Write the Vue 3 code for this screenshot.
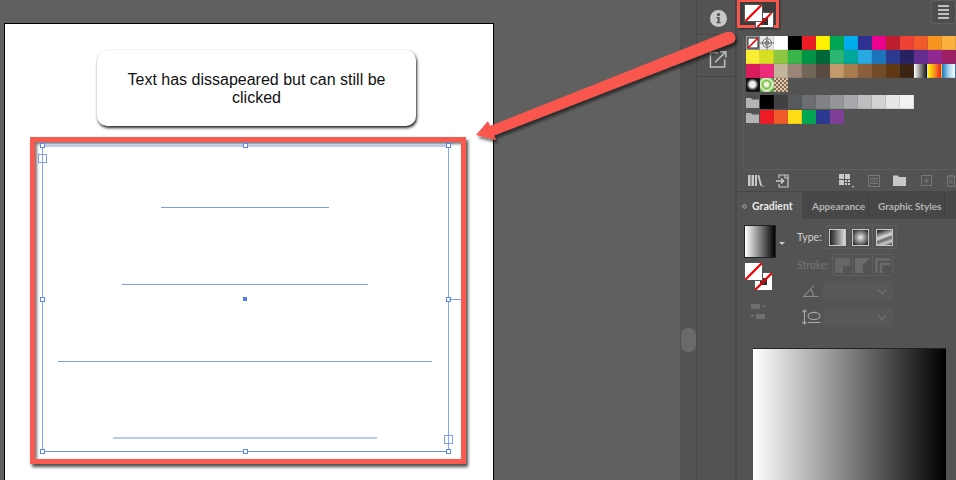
<script setup>
const swatches = [
  '#ed1c24', '#fff200', '#00a651', '#00aeef', '#2e3192', '#ec008c', '#be1e2d', '#ef4136', '#f15a29', '#f7941d', '#fbb040',
  '#f9ed32', '#d7df23', '#8dc63f', '#39b54a', '#009444', '#006838', '#2bb673', '#00a79d', '#27aae1', '#1c75bc', '#2b3990', '#262262', '#662d91', '#92278f', '#9e1f63',
  '#da1c5c', '#ee2a7b', '#c2b59b', '#9b8579', '#726658', '#594a42', '#c49a6c', '#a97c50', '#8b5e3c', '#754c29', '#603913', '#3c2415',
  'linear-gradient(90deg,#fff,#111)', 'linear-gradient(90deg,#fff200,#f7941d,#ed1c24)', 'linear-gradient(90deg,#1c75bc,#9fd3f0,#fff)'
]
const greys = ['#000000', '#414042', '#58595b', '#6d6e71', '#808285', '#939598', '#a7a9ac', '#bcbec0', '#d1d3d4', '#e6e7e8', '#f1f2f2']
const brights = ['#ed1c24', '#f15a29', '#ffde17', '#00a651', '#2b3990', '#7f3f98']

// text lines shown as plain rules inside the selected frame
const rules = [
  { left: 118, width: 168, thick: false },
  { left: 79, width: 246, thick: false },
  { left: 15, width: 374, thick: false },
  { left: 70, width: 264, thick: true }
]
const handles = ['tl', 'tm', 'tr', 'ml', 'mr', 'bl', 'bm', 'br']
</script>

<template>
  <div class="app">
    <main class="canvas">
      <div class="artboard">
        <div class="note">Text has dissapeared but can still be clicked</div>
        <div class="red-frame">
          <div class="selection">
            <div
              v-for="(r, i) in rules"
              :key="i"
              class="rule"
              :class="{ thick: r.thick }"
              :style="{ marginLeft: r.left + 'px', width: r.width + 'px' }"
            ></div>
            <span v-for="h in handles" :key="h" class="handle" :class="h"></span>
            <span class="port in"></span>
            <span class="port out"></span>
            <span class="center"></span>
            <span class="tick"></span>
          </div>
        </div>
      </div>
    </main>

    <div class="scroll-strip"><div class="pill"></div></div>

    <nav class="dock">
      <button class="dock-btn">
        <svg width="17" height="17" viewBox="0 0 18 18">
          <circle cx="9" cy="9" r="9" fill="#c8c8c8" />
          <circle cx="9" cy="4.800" r="1.700" fill="#535353" />
          <path d="M6.800 7.400h3.400v5.200h1.200V14H6.800v-1.400H8V8.800H6.800z" fill="#535353" />
        </svg>
      </button>
      <button class="dock-btn">
        <svg width="19" height="18" viewBox="0 0 19 19" fill="none" stroke="#c0c0c0" stroke-width="1.600">
          <path d="M9 3H1v15h15v-8" />
          <path d="M6 13L17 2M11 1.800h6.200V8" />
        </svg>
      </button>
    </nav>

    <aside class="panels">
      <section class="swatches-panel">
        <div class="panel-top">
          <div class="fs-box">
            <div class="fs-mini big-f"><svg viewBox="0 0 18 18"><path d="M0 18L18 0" stroke="#ee0000" stroke-width="2.400" /></svg></div>
            <div class="fs-mini small-s"><svg viewBox="0 0 18 18"><path d="M0 18L18 0" stroke="#ee0000" stroke-width="2.400" /></svg></div>
          </div>
          <button class="menu-btn"><i></i><i></i><i></i><i></i></button>
        </div>

        <div class="swatch-box">
          <div class="swatch-grid">
            <div class="sw none">
              <svg viewBox="0 0 14 14"><rect x="2" y="2" width="10" height="10" fill="#fff" stroke="#222" /><path d="M2 12L12 2" stroke="#ee0000" stroke-width="1.600" /></svg>
            </div>
            <div class="sw reg">
              <svg viewBox="0 0 14 14" fill="none" stroke="#555" stroke-width="0.800"><circle cx="7" cy="7" r="4.400" /><circle cx="7" cy="7" r="2" /><path d="M0 7h14M7 0v14" /></svg>
            </div>
            <div class="sw" style="background: #fff"></div>
            <div class="sw" style="background: #000"></div>
            <div v-for="(c, i) in swatches" :key="i" class="sw" :style="{ background: c }"></div>
            <div class="sw pat-a"></div>
            <div class="sw pat-b"></div>
            <div class="sw pat-c"></div>
          </div>

          <div class="group-row first">
            <svg class="folder" width="13" height="11" viewBox="0 0 13 11"><path d="M0 1h5l1 1.400h7V11H0z" fill="#b4b4b4" /></svg>
            <div v-for="c in greys" :key="c" class="sw" :style="{ background: c }"></div>
          </div>
          <div class="group-row">
            <svg class="folder" width="13" height="11" viewBox="0 0 13 11"><path d="M0 1h5l1 1.400h7V11H0z" fill="#b4b4b4" /></svg>
            <div v-for="c in brights" :key="c" class="sw" :style="{ background: c }"></div>
          </div>
        </div>

        <div class="toolbar">
          <svg width="16" height="13" viewBox="0 0 16 13" fill="#c8c8c8"><path d="M0 1h2.500v11H0zM3.500 1H6v11H3.500zM7 1h2v11H7zM9.500 1.500l1.800-.6 2.700 10.600-1.800.5z" /><path d="M14.500 11.500h1.200v1.200h-1.200z" /></svg>
          <svg class="ml-place" width="14" height="14" viewBox="0 0 14 14" fill="none" stroke="#c8c8c8" stroke-width="1.200"><path d="M3 4V1h9v12H3v-3" /><path d="M0 7h7M5 4.500L7.500 7 5 9.500" stroke-width="1.600" /><path d="M9 1v3h3" /></svg>
          <svg class="ml-types" width="16" height="14" viewBox="0 0 16 14" fill="#c8c8c8"><path d="M0 0h5v5H0zM6 0h5v5H6zM0 6h5v5H0z" /><path d="M6 6h2v2H6zM9 6h2v2H9zM6 9h2v2H6zM9 9h2v2H9z" /><path d="M13.500 12h1.400v1.400h-1.400z" /></svg>
          <svg class="ml-list" width="12" height="12" viewBox="0 0 12 12" fill="none" stroke="#777" stroke-width="1"><rect x=".5" y=".5" width="11" height="11" /><path d="M2 3.500h8M2 6h8M2 8.500h8" /></svg>
          <svg class="ml-folder" width="13" height="11" viewBox="0 0 13 11"><path d="M0 .5h5l1 1.400h7V11H0z" fill="#c8c8c8" /></svg>
          <svg class="ml-new" width="11" height="11" viewBox="0 0 11 11" fill="none" stroke="#777" stroke-width="1"><rect x=".5" y=".5" width="10" height="10" /><path d="M5.500 3v5M3 5.500h5" /></svg>
          <svg class="ml-trash" width="10" height="12" viewBox="0 0 10 12" fill="none" stroke="#777" stroke-width="1"><path d="M0 2h10M3 2V.5h4V2M1.500 2v9.500h7V2M4 4v5M6 4v5" /></svg>
        </div>
      </section>

      <section class="gradient-panel">
        <div class="tabs">
          <div class="tab active"><span class="updown">◇</span>Gradient</div>
          <div class="tab appearance">Appearance</div>
          <div class="tab styles">Graphic Styles</div>
          <div class="tab-rest"></div>
        </div>

        <div class="gradient-body">
          <div class="left-col">
            <div class="thumb-row">
              <div class="grad-thumb"></div>
              <span class="caret"></span>
            </div>
            <div class="fs-pair">
              <div class="fs-mini big-f"><svg viewBox="0 0 18 18"><path d="M0 18L18 0" stroke="#ee0000" stroke-width="2.400" /></svg></div>
              <div class="fs-mini small-s"><svg viewBox="0 0 18 18"><path d="M0 18L18 0" stroke="#ee0000" stroke-width="2.400" /></svg></div>
            </div>
            <svg class="reverse" width="16" height="17" viewBox="0 0 16 17" fill="#6f6f6f"><path d="M1 1h9v5H1zM11 2.500h5L13.500 5z" /><path d="M6 11h9v5H6zM5 13.500H0L2.500 11z" /></svg>
          </div>

          <div class="right-col">
            <div class="row">
              <label class="lbl type">Type:</label>
              <div class="btn-group">
                <div class="cell"><span class="g g-linear"></span></div>
                <div class="cell"><span class="g g-radial"></span></div>
                <div class="cell"><span class="g g-free"></span></div>
              </div>
            </div>
            <div class="row stroke-row">
              <label class="lbl off">Stroke:</label>
              <div class="btn-group off">
                <div class="cell"><svg width="15" height="15" viewBox="0 0 15 15"><path d="M0 0h15v8H8v7H0z" fill="#666" /></svg></div>
                <div class="cell"><svg width="15" height="15" viewBox="0 0 15 15"><path d="M0 0h15L8 7v8H0z" fill="#6a6a6a" /></svg></div>
                <div class="cell"><svg width="15" height="15" viewBox="0 0 15 15" fill="none" stroke="#6a6a6a" stroke-width="2.600"><path d="M1.500 15V1.500H15M6 15V6h9" /></svg></div>
              </div>
            </div>
            <div class="row select-row">
              <svg class="angle" width="16" height="12" viewBox="0 0 16 12" fill="none" stroke="#8c8c8c" stroke-width="1.100"><path d="M11 .5L1 11.500h14.500M7.500 4.500c2 1.800 2.800 4 2.800 7" /></svg>
              <div class="fake-select"><span class="chev"></span></div>
            </div>
            <div class="row select-row ratio-row">
              <svg class="ratio" width="19" height="16" viewBox="0 0 19 16" fill="none" stroke="#a8a8a8" stroke-width="1.100"><path d="M2.500 1v14M.5 3l2-2 2 2M.5 13l2 2 2-2" /><ellipse cx="12" cy="7" rx="6" ry="3.600" /><path d="M6 13.500h12.500" /></svg>
              <div class="fake-select"><span class="chev"></span></div>
            </div>
          </div>
        </div>

        <div class="gradient-slider"></div>
      </section>
    </aside>

    <svg class="big-arrow" width="956" height="480" viewBox="0 0 956 480">
      <defs>
        <filter id="arrowShadow" x="-10%" y="-10%" width="120%" height="130%">
          <feDropShadow dx="2" dy="3" stdDeviation="1.500" flood-color="#000" flood-opacity="0.55" />
        </filter>
      </defs>
      <g filter="url(#arrowShadow)">
        <path d="M476 135L488 121L490 126L725 32.500Q733 30 735 36Q736.500 41.500 731 43.500L494 135.500L496 140Z" fill="#f9574e" />
      </g>
    </svg>
  </div>
</template>

<style>
html, body {
  margin: 0;
  background: #606060;
  overflow: hidden;
}
</style>

<style scoped>
.app {
  position: relative;
  display: flex;
  width: 956px;
  height: 480px;
  overflow: hidden;
  background: #606060;
  font-family: "Liberation Sans", Arial, sans-serif;
}

.big-arrow {
  position: absolute;
  top: 0;
  left: 0;
  pointer-events: none;
}

/* canvas */
.canvas {
  width: 680px;
  flex: none;
  padding: 23px 0 0 4px;
  box-sizing: border-box;
}

.artboard {
  width: 490px;
  height: 470px;
  box-sizing: border-box;
  border: 1px solid #000;
  background: #fff;
  padding-top: 26px;
}

.note {
  width: 319px;
  height: 76px;
  margin-left: 92px;
  box-sizing: border-box;
  padding: 21px 20px 0;
  border-radius: 10px;
  background: #fff;
  box-shadow: 1px 2px 3px rgba(0, 0, 0, 0.85), 0 0 1px rgba(0, 0, 0, 0.15);
  color: #111;
  font-size: 16px;
  line-height: 18px;
  text-align: center;
}

.red-frame {
  width: 436px;
  height: 327px;
  margin: 11px 0 0 25px;
  box-sizing: border-box;
  border: 5px solid #fb5a50;
  box-shadow: 2px 3px 3px rgba(0, 0, 0, 0.7), inset 2px 2px 3px rgba(0, 0, 0, 0.55);
  padding: 3px 0 0 7px;
}

.selection {
  position: relative;
  width: 407px;
  height: 307px;
  box-sizing: border-box;
  border: 1px solid #84a4f8;
  border-top: 2px solid #b9cbfa;
  border-bottom-color: #6a93f5;
  padding-top: 60px;
  display: flex;
  flex-direction: column;
  gap: 76px;
}

.rule {
  height: 1px;
  background: #7c9df0;
}

.rule.thick {
  height: 2px;
  margin-top: -1px;
  background: #b9cbfa;
}

.handle {
  position: absolute;
  width: 3px;
  height: 3px;
  border: 1px solid #5b86ee;
  background: #fff;
}
.tl { left: -3px; top: -4px; }
.tm { left: 200px; top: -4px; }
.tr { left: 403px; top: -4px; }
.ml { left: -3px; top: 150px; }
.mr { left: 403px; top: 150px; }
.bl { left: -3px; bottom: -3px; }
.bm { left: 200px; bottom: -3px; }
.br { left: 403px; bottom: -3px; }

.port {
  position: absolute;
  width: 7px;
  height: 7px;
  border: 1px solid #7f9ff5;
  background: transparent;
}
.port.in { left: -5px; top: 7px; }
.port.out { right: -5px; bottom: 7px; }

.center {
  position: absolute;
  left: 200px;
  top: 150px;
  width: 4px;
  height: 4px;
  background: #4f7df0;
}

.tick {
  position: absolute;
  left: 406px;
  top: 152px;
  width: 12px;
  height: 1px;
  background: #7c9df0;
}

/* strips */
.scroll-strip {
  width: 17px;
  flex: none;
  display: flex;
  flex-direction: column;
  padding-top: 328px;
  box-sizing: border-box;
  background: #535353;
  border-right: 1px solid #484848;
}

.pill {
  width: 15px;
  height: 24px;
  margin-left: 1px;
  border-radius: 7px;
  background: #6a6a6a;
}

.dock {
  width: 38px;
  flex: none;
  background: #535353;
  border-right: 1px solid #474747;
}

.dock-btn {
  display: flex;
  align-items: center;
  justify-content: center;
  width: 100%;
  height: 35px;
  padding: 3px 0 0 4px;
  background: none;
  border: none;
  border-bottom: 1px solid #474747;
}

.dock-btn + .dock-btn {
  height: 42px;
  padding-top: 7px;
}

/* panels */
.panels {
  flex: 1;
  display: flex;
  flex-direction: column;
  background: #535353;
  border-left: 1px solid #4a4a4a;
}

.swatches-panel {
  height: 192px;
  flex: none;
  box-sizing: border-box;
  border-bottom: 1px solid #474747;
}

.panel-top {
  display: flex;
  justify-content: space-between;
  height: 36px;
}

.fs-box {
  position: relative;
  width: 42px;
  height: 29px;
  margin-top: -1px;
  box-sizing: border-box;
  border: 3px solid #f9574e;
  background: #3d3d3d;
  box-shadow: 1px 1px 2px rgba(0, 0, 0, 0.5);
}

.fs-mini {
  position: absolute;
  box-sizing: border-box;
  background: #fff;
  border: 1px solid #555;
  overflow: hidden;
}

.fs-mini svg {
  display: block;
  position: relative;
  z-index: 1;
  width: 100%;
  height: 100%;
}

.fs-box .big-f {
  left: 4px;
  top: 2px;
  width: 19px;
  height: 18px;
  z-index: 1;
}

.fs-box .small-s {
  left: 15px;
  top: 10px;
  width: 19px;
  height: 16px;
}

.fs-box .small-s::after,
.fs-pair .small-s::after {
  content: "";
  position: absolute;
  left: 5px;
  top: 5px;
  width: 7px;
  height: 7px;
  background: #333;
}

.menu-btn {
  display: flex;
  flex-direction: column;
  justify-content: center;
  gap: 2px;
  width: 25px;
  height: 24px;
  padding: 0 6px;
  box-sizing: border-box;
  background: #4d4d4d;
  border: 1px solid #5f5f5f;
  border-radius: 3px;
}

.menu-btn i {
  display: block;
  height: 2px;
  background: #c0c0c0;
}

.swatch-box {
  margin-left: 6px;
  height: 134px;
  box-sizing: border-box;
  border-left: 1px solid #5e5e5e;
  border-bottom: 1px solid #5e5e5e;
  border-radius: 0 0 0 3px;
  padding-left: 2px;
}

.swatch-grid {
  display: grid;
  grid-template-columns: repeat(15, 14px);
  grid-auto-rows: 14px;
}

.sw {
  width: 14px;
  height: 14px;
  box-sizing: border-box;
  border-right: 1px solid rgba(80, 80, 80, 0.15);
  border-bottom: 1px solid rgba(80, 80, 80, 0.15);
}

.sw svg {
  display: block;
  width: 14px;
  height: 14px;
}

.sw.none {
  background: #9a9a9a;
}

.sw.reg {
  background: #e8e8e8;
}

.pat-a {
  background: radial-gradient(circle at 50% 50%, #eee 0 3px, #999 4px, #111 6px);
}

.pat-b {
  background: radial-gradient(circle at 50% 50%, #f4f4e0 0 2px, #6fbf3f 4px, #e8f5d0 6px, #4ca83a 8px);
}

.pat-c {
  background: repeating-conic-gradient(#8a6a4c 0 25%, #dccab4 0 50%) 0 0 / 4px 4px;
}

.group-row {
  display: flex;
  align-items: center;
  height: 14px;
  margin-top: 1px;
}

.group-row.first {
  margin-top: 3px;
}

.folder {
  width: 13px;
  margin-right: 1px;
}

.toolbar {
  display: flex;
  align-items: center;
  height: 21px;
  padding-left: 11px;
}

.ml-place { margin-left: 12px; }
.ml-types { margin-left: 49px; }
.ml-list { margin-left: 13px; }
.ml-folder { margin-left: 13px; }
.ml-new { margin-left: 15px; }
.ml-trash { margin-left: 14px; }

/* gradient panel */
.gradient-panel {
  flex: 1;
  min-height: 0;
  display: flex;
  flex-direction: column;
}

.tabs {
  display: flex;
  height: 27px;
  flex: none;
  font-family: Lato, "Open Sans", sans-serif;
  font-size: 10px;
  font-weight: 700;
  color: #b4b4b4;
  white-space: nowrap;
}

.tab {
  display: flex;
  align-items: center;
  box-sizing: border-box;
  background: #474747;
  border-right: 1px solid #3f3f3f;
  padding-left: 9px;
}

.tab.active {
  width: 65px;
  padding-left: 5px;
  background: #535353;
  color: #e8e8e8;
  font-size: 10.500px;
  border-right: none;
}

.tab.appearance { width: 67px; padding-left: 10px; }
.tab.styles { width: 76px; }

.tab-rest {
  flex: 1;
  background: #474747;
}

.updown {
  width: 10px;
  font-size: 6px;
  color: #bbb;
}

.gradient-body {
  display: flex;
  padding: 6px 0 0 7px;
  height: 103px;
  flex: none;
  box-sizing: border-box;
}

.left-col {
  width: 53px;
  flex: none;
}

.thumb-row {
  display: flex;
  align-items: center;
}

.grad-thumb {
  width: 32px;
  height: 33px;
  box-sizing: border-box;
  border: 1px solid #222;
  background: linear-gradient(90deg, #fff, #000);
}

.caret {
  width: 0;
  height: 0;
  margin-left: 3px;
  margin-top: 4px;
  border-left: 3px solid transparent;
  border-right: 3px solid transparent;
  border-top: 3px solid #c8c8c8;
}

.fs-pair {
  position: relative;
  width: 30px;
  height: 30px;
  margin-top: 4px;
}

.fs-pair .big-f {
  left: 0;
  top: 0;
  width: 19px;
  height: 19px;
  z-index: 1;
}

.fs-pair .small-s {
  left: 10px;
  top: 10px;
  width: 19px;
  height: 19px;
}

.reverse {
  display: block;
  margin: 11px 0 0 6px;
}

.right-col {
  display: flex;
  flex-direction: column;
}

.row {
  display: flex;
  align-items: center;
  justify-content: flex-end;
  width: 100px;
}

.stroke-row {
  margin-top: 5px;
}

.lbl {
  margin-right: 3px;
  font-family: Lato, "Open Sans", sans-serif;
  font-size: 10.500px;
  color: #cfcfcf;
}

.lbl.off {
  color: #757575;
}

.btn-group {
  display: flex;
  width: 74px;
  height: 24px;
  box-sizing: border-box;
  border: 1px solid #5e5e5e;
  border-radius: 3px;
}

.btn-group.off {
  height: 22px;
  width: 70px;
  margin-right: 4px;
}

.cell {
  flex: 1;
  display: flex;
  align-items: center;
  justify-content: center;
  border-right: 1px solid #5e5e5e;
}

.cell:last-child {
  border-right: none;
}

.g {
  width: 15px;
  height: 15px;
  border: 1px solid #c4c4c4;
}

.g-linear {
  background: linear-gradient(90deg, #222, #ddd);
}

.g-radial {
  background: radial-gradient(circle, #eee, #333 85%);
}

.g-free {
  background: linear-gradient(160deg, #333 10%, #ddd 45%, #666 60%, #ccc 80%, #333);
}

.select-row {
  margin-top: 5px;
  padding-right: 4px;
  box-sizing: border-box;
}

.ratio-row {
  margin-top: 6px;
}

.angle {
  margin-right: 4px;
}

.ratio {
  margin-right: 2px;
}

.fake-select {
  position: relative;
  width: 70px;
  height: 20px;
  background: #585858;
  border-radius: 2px;
}

.chev {
  position: absolute;
  right: 8px;
  top: 6px;
  width: 5px;
  height: 5px;
  border-right: 1px solid #777;
  border-bottom: 1px solid #777;
  transform: rotate(45deg);
}

.gradient-slider {
  flex: 1;
  margin: 26px 10px 0 16px;
  border-top: 1px solid #222;
  background: linear-gradient(90deg, #fff, #000);
}
</style>
